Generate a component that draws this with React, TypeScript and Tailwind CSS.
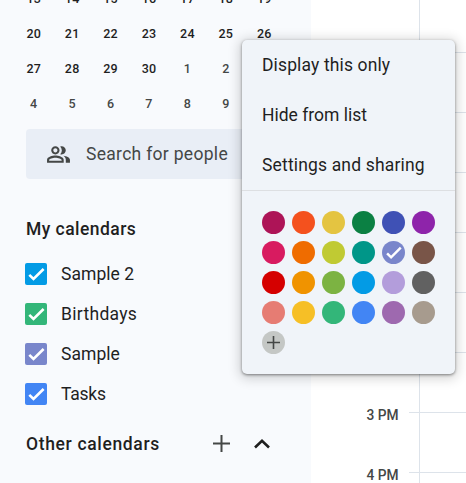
import React from 'react';

const DAYS = [
  ['13', '14', '15', '16', '17', '18', '19'],
  ['20', '21', '22', '23', '24', '25', '26'],
  ['27', '28', '29', '30', '1', '2', ''],
  ['4', '5', '6', '7', '8', '9', ''],
];

const CALENDARS = [
  { name: 'Sample 2', color: '#039be5', spacing: 'tracking-[0.05px]' },
  { name: 'Birthdays', color: '#33b679', spacing: 'tracking-[0.3px]' },
  { name: 'Sample', color: '#7986cb', spacing: 'tracking-[0.05px]' },
  { name: 'Tasks', color: '#4285f4', spacing: 'tracking-[-0.25px]' },
];

const COLORS = [
  '#ad1457', '#f4511e', '#e4c441', '#0b8043', '#3f51b5', '#8e24aa',
  '#d81b60', '#ef6c00', '#c0ca33', '#009688', '#7986cb', '#795548',
  '#d50000', '#f09300', '#7cb342', '#039be5', '#b39ddb', '#616161',
  '#e67c73', '#f6bf26', '#33b679', '#4285f4', '#9e69af', '#a79b8e',
];

const HOURS = ['', '', '', '', '', '', '3 PM', '4 PM'];

function Check({ className }: { className: string }) {
  return (
    <svg viewBox="0 0 22 22" className={className} fill="none" stroke="white" strokeWidth="2.6">
      <path d="M4.3 11.8 8.5 16 18.6 6" />
    </svg>
  );
}

function Sidebar() {
  return (
    <aside className="h-full w-[311px] shrink-0 overflow-hidden bg-[#f8fafd]">
      <div className="-mt-[19px] ml-[14.5px] grid w-[269px] grid-cols-7 text-center text-[12.5px] font-medium tracking-[0.2px]">
        {DAYS.flatMap((week, w) =>
          week.map((day, d) => (
            <div
              key={`${w}-${d}`}
              className={`h-[35px] leading-[36px] ${w === 3 || (w === 2 && d > 3) ? 'text-[#444746]' : 'text-[#1f1f1f]'}`}
            >
              {day}
            </div>
          )),
        )}
      </div>
      <div className="ml-[26px] mt-2 flex h-[50px] w-[260px] items-center rounded bg-[#e9eef6] pl-5 text-[#444746]">
        <svg viewBox="0 0 24 24" className="size-[25px]" fill="currentColor">
          <path d="M16.67 13.13C18.04 14.06 19 15.32 19 17v3h4v-3c0-2.18-3.57-3.47-6.33-3.87zM15 12c2.21 0 4-1.79 4-4s-1.79-4-4-4c-.47 0-.91.1-1.33.24a5.98 5.98 0 0 1 0 7.52c.42.14.86.24 1.33.24zM9 12c2.21 0 4-1.79 4-4s-1.79-4-4-4-4 1.79-4 4 1.79 4 4 4zm0-6c1.1 0 2 .9 2 2s-.9 2-2 2-2-.9-2-2 .9-2 2-2zm0 7c-2.67 0-8 1.34-8 4v3h16v-3c0-2.66-5.33-4-8-4zm6 5H3v-.99C3.2 16.29 6.3 15 9 15s5.8 1.28 6 2v1z" />
        </svg>
        <span className="ml-[15px] text-[17.5px] tracking-[0.3px]">Search for people</span>
      </div>
      <h2 className="ml-[26px] mt-[30px] h-10 text-[17.5px] font-medium leading-10 tracking-[0.45px] text-[#1f1f1f]">
        My calendars
      </h2>
      <ul className="mt-[5px] pl-[25px]">
        {CALENDARS.map((c) => (
          <li key={c.name} className="flex h-10 items-center text-[17.5px] text-[#1f1f1f]">
            <span className="flex size-[22px] items-center justify-center rounded-[2px]" style={{ backgroundColor: c.color }}>
              <Check className="size-[22px]" />
            </span>
            <span className={`ml-3.5 ${c.spacing}`}>{c.name}</span>
          </li>
        ))}
      </ul>
      <div className="ml-[26px] mt-[9px] flex h-[41px] items-center text-[17.5px] font-medium text-[#1f1f1f]">
        <h2 className="w-[187px] pt-0.5 leading-[27px] tracking-[0.65px]">Other calendars</h2>
        <svg viewBox="0 0 17 17" className="size-[17px]" stroke="#444746" strokeWidth="2">
          <path d="M8.5 0v17M0 8.5h17" />
        </svg>
        <svg viewBox="0 0 16 10" className="ml-6 h-2.5 w-4" fill="none" stroke="#1f1f1f" strokeWidth="2.6">
          <path d="M1 8.5 8 1.8l7 6.7" />
        </svg>
      </div>
    </aside>
  );
}

function DayGrid() {
  return (
    <main className="flex h-full grow bg-white">
      <div className="flex w-[88px] flex-col items-end pt-[25px] text-[13.75px] font-medium text-[#444746]">
        {HOURS.map((h, i) => (
          <div key={i} className="mr-[0.5px] h-[60px] shrink-0 leading-[60px]">{h}</div>
        ))}
      </div>
      <div className="flex grow pl-[10px]">
        <div className="-mr-px box-content w-[10px] shrink-0 border-r border-[#dde3ea] bg-white">
          <div className="h-[53px] border-b border-[#dde3ea]" />
          {HOURS.slice(1).map((_, i) => (
            <div key={i} className="h-[60px] border-b border-[#dde3ea]" />
          ))}
        </div>
        <div className="grow">
          <div className="h-[53px] border-b border-[#dde3ea]" />
          {HOURS.slice(1).map((_, i) => (
            <div key={i} className="h-[60px] border-b border-[#dde3ea]" />
          ))}
        </div>
      </div>
    </main>
  );
}

function CalendarMenu() {
  return (
    <div className="absolute left-[242px] top-10 h-[334px] w-[213px] rounded-[5px] bg-[#f0f4f9] text-[17.5px] text-[#1f1f1f] shadow-[0_1px_3px_rgba(0,0,0,0.45),0_2px_12px_3px_rgba(0,0,0,0.16)]">
      <div className="h-[150px]">
        <div className="h-[50px] pl-5 leading-[50px] tracking-[0.13px]">Display this only</div>
        <div className="h-[50px] pl-5 leading-[50px]">Hide from list</div>
        <div className="h-[50px] pl-5 leading-[50px] tracking-[0.16px]">Settings and sharing</div>
      </div>
      <div className="border-t border-[#dddfe2]" />
      <div className="grid w-[193px] grid-cols-6 gap-[7px] pl-5 pt-5">
        {COLORS.map((c, i) => (
          <span key={c} className="flex size-[23px] items-center justify-center rounded-full" style={{ backgroundColor: c }}>
            {i === 10 && <Check className="size-[21px]" />}
          </span>
        ))}
        <span className="flex size-[23px] items-center justify-center rounded-full bg-[#c4c7c5]">
          <svg viewBox="0 0 13 13" className="size-[13px]" stroke="#444746" strokeWidth="1.6">
            <path d="M6.5 0v13M0 6.5h13" />
          </svg>
        </span>
      </div>
    </div>
  );
}

export default function App() {
  return (
    <div className="relative flex h-[483px] w-[466px] overflow-hidden font-[Roboto,'Liberation_Sans',sans-serif]">
      <Sidebar />
      <DayGrid />
      <CalendarMenu />
    </div>
  );
}
